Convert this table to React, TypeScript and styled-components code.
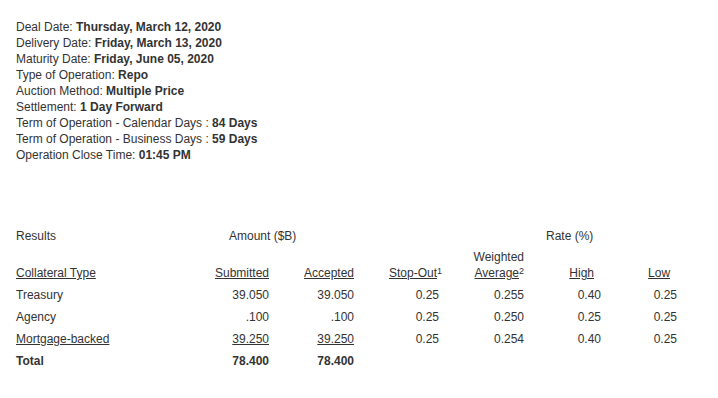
import React from 'react';
import styled, { createGlobalStyle } from 'styled-components';

const GlobalStyle = createGlobalStyle`
  body {
    margin: 8px;
    background: #fff;
    font-family: "Liberation Sans", Arial, sans-serif;
    font-size: 12px;
    color: #333;
  }
`;

const Page = styled.div`
  padding: 11px 8px 0;
`;

const Details = styled.div`
  line-height: 16px;
  margin-bottom: 62px;
`;

const Line = styled.div``;

const Table = styled.table`
  border-collapse: collapse;
  border-spacing: 0;
  table-layout: fixed;
  width: 661px;
  font-size: 12px;
  color: #333;
`;

const GroupCell = styled.td<{ $pl?: number }>`
  padding: 3px 0 3px ${p => p.$pl || 0}px;
  line-height: 16px;
  text-align: left;
  white-space: nowrap;
`;

const HeadCell = styled.th<{ $align?: string; $pr?: number }>`
  padding: 2px ${p => p.$pr || 0}px 3px 0;
  line-height: 16px;
  font-weight: normal;
  vertical-align: bottom;
  text-align: ${p => p.$align || 'right'};
  white-space: nowrap;
`;

const U = styled.span`
  text-decoration: underline;
`;

const Sup = styled.sup`
  font-size: 9px;
  line-height: 0;
  vertical-align: 3px;
`;

const Cell = styled.td<{ $align?: string; $pr?: number; $bold?: boolean }>`
  padding: 3px ${p => p.$pr || 0}px 3px 0;
  line-height: 16px;
  text-align: ${p => p.$align || 'right'};
  font-weight: ${p => (p.$bold ? 'bold' : 'normal')};
  white-space: nowrap;
`;

const details: [string, string][] = [
  ['Deal Date: ', 'Thursday, March 12, 2020'],
  ['Delivery Date: ', 'Friday, March 13, 2020'],
  ['Maturity Date: ', 'Friday, June 05, 2020'],
  ['Type of Operation: ', 'Repo'],
  ['Auction Method: ', 'Multiple Price'],
  ['Settlement: ', '1 Day Forward'],
  ['Term of Operation - Calendar Days : ', '84 Days'],
  ['Term of Operation - Business Days : ', '59 Days'],
  ['Operation Close Time: ', '01:45 PM'],
];

type Row = {
  type: string;
  submitted: string;
  accepted: string;
  stopOut?: string;
  weighted?: string;
  high?: string;
  low?: string;
  link?: boolean;
  total?: boolean;
};

const rows: Row[] = [
  { type: 'Treasury', submitted: '39.050', accepted: '39.050', stopOut: '0.25', weighted: '0.255', high: '0.40', low: '0.25' },
  { type: 'Agency', submitted: '.100', accepted: '.100', stopOut: '0.25', weighted: '0.250', high: '0.25', low: '0.25' },
  { type: 'Mortgage-backed', submitted: '39.250', accepted: '39.250', stopOut: '0.25', weighted: '0.254', high: '0.40', low: '0.25', link: true },
  { type: 'Total', submitted: '78.400', accepted: '78.400', total: true },
];

const widths = [174, 79, 85, 88, 82, 77, 76];

const App: React.FC = () => {
  const wrap = (text: string, link?: boolean) => (link ? <U>{text}</U> : text);

  return (
    <Page>
      <GlobalStyle />
      <Details>
        {details.map(([label, value]) => (
          <Line key={label}>
            {label}
            <b>{value}</b>
          </Line>
        ))}
      </Details>

      <Table>
        <colgroup>
          {widths.map((w, i) => (
            <col key={i} style={{ width: w }} />
          ))}
        </colgroup>
        <tbody>
          <tr>
            <GroupCell>Results</GroupCell>
            <GroupCell colSpan={2} $pl={39}>Amount ($B)</GroupCell>
            <GroupCell colSpan={4} $pl={192}>Rate (%)</GroupCell>
          </tr>
          <tr>
            <HeadCell $align="left"><U>Collateral Type</U></HeadCell>
            <HeadCell><U>Submitted</U></HeadCell>
            <HeadCell><U>Accepted</U></HeadCell>
            <HeadCell><U>Stop-Out</U><Sup>1</Sup></HeadCell>
            <HeadCell>
              Weighted
              <br />
              <U>Average</U><Sup>2</Sup>
            </HeadCell>
            <HeadCell $pr={7}><U>High</U></HeadCell>
            <HeadCell $pr={7}><U>Low</U></HeadCell>
          </tr>
          {rows.map(r => (
            <tr key={r.type}>
              <Cell $align="left" $bold={r.total}>{wrap(r.type, r.link)}</Cell>
              <Cell $bold={r.total}>{wrap(r.submitted, r.link)}</Cell>
              <Cell $bold={r.total}>{wrap(r.accepted, r.link)}</Cell>
              <Cell $pr={3}>{r.stopOut}</Cell>
              <Cell>{r.weighted}</Cell>
              <Cell>{r.high}</Cell>
              <Cell>{r.low}</Cell>
            </tr>
          ))}
        </tbody>
      </Table>
    </Page>
  );
};

export default App;
